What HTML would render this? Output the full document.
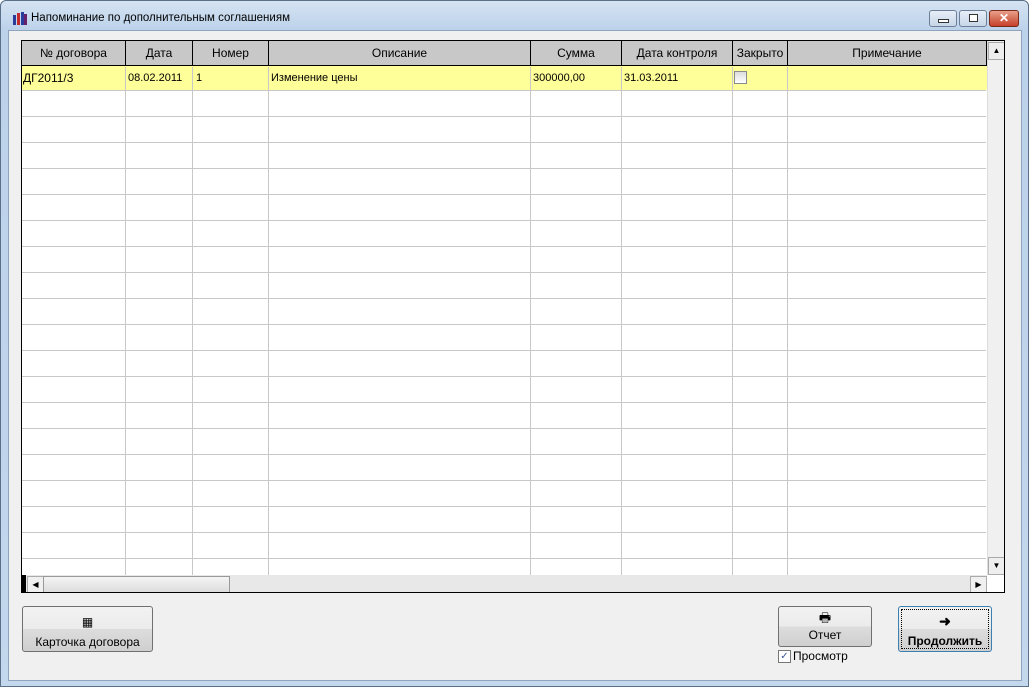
<!DOCTYPE html>
<html><head><meta charset="utf-8"><style>
body{margin:0;width:1030px;height:687px;overflow:hidden;font-family:"Liberation Sans",sans-serif;background:#fff}
.win{position:absolute;left:0;top:0;width:1029px;height:687px;border-radius:6px 6px 0 0;background:linear-gradient(#d6e4f3,#bcd2ea 30px,#c3d7ed);box-shadow:inset 0 0 0 1px #5a6f88}
.title{position:absolute;left:31px;top:12px;font-size:11.5px;color:#000}
.client{position:absolute;left:8px;top:30px;width:1012px;height:649px;background:#f0f0f0;border:1px solid #8ea4bd}
.grid{position:absolute;left:21px;top:40px;width:982px;height:551px;border:1px solid #000;background:#fff;overflow:hidden}
.h{position:absolute;top:0;height:25px;background:#c8c8c8;border-right:1px solid #000;border-bottom:1px solid #000;font-size:12px;text-align:center;line-height:25px;box-sizing:border-box}
.v{position:absolute;top:26px;height:508px;border-left:1px solid #c8c8c8}
.r{position:absolute;left:0;width:964px;border-top:1px solid #c8c8c8}
.c{position:absolute;top:25px;height:25px;line-height:24px;font-size:11px}
.btn{position:absolute;border:1px solid #707070;border-radius:3px;background:linear-gradient(#f2f2f2,#ebebeb 50%,#dddddd 50%,#cfcfcf);font-size:12px;text-align:center;box-sizing:border-box}
</style></head><body>
<div class="win">
<svg style="position:absolute;left:12px;top:10px" width="16" height="16"><rect x="1" y="5" width="3" height="10" fill="#2a3d9c"/><rect x="5" y="3" width="3" height="12" fill="#c22a2a"/><rect x="9" y="2" width="3" height="13" fill="#2a3d9c"/><rect x="12" y="4" width="3" height="11" fill="#6a1f6a"/></svg>
<div class="title">Напоминание по дополнительным соглашениям</div>
<div style="position:absolute;left:929px;top:10px;width:26px;height:15px;border:1px solid #6d7f96;border-radius:3px;background:linear-gradient(#e6eef8,#c8d6e8)"><div style="position:absolute;left:8px;top:8px;width:9px;height:2px;border:1px solid #333;background:#fff"></div></div>
<div style="position:absolute;left:959px;top:10px;width:26px;height:15px;border:1px solid #6d7f96;border-radius:3px;background:linear-gradient(#e6eef8,#c8d6e8)"><div style="position:absolute;left:9px;top:3px;width:7px;height:6px;border:1px solid #333;background:#fff"></div></div>
<div style="position:absolute;left:989px;top:10px;width:28px;height:15px;border:1px solid #7a2a1a;border-radius:3px;background:linear-gradient(#e8a08a,#c6402a);color:#fff;font-weight:bold;font-size:12px;text-align:center;line-height:15px">✕</div>
<div class="client"></div>
<div class="grid">
<div class="h" style="left:0;width:104px">№ договора</div>
<div class="h" style="left:104px;width:67px">Дата</div>
<div class="h" style="left:171px;width:76px">Номер</div>
<div class="h" style="left:247px;width:262px">Описание</div>
<div class="h" style="left:509px;width:91px">Сумма</div>
<div class="h" style="left:600px;width:111px">Дата контроля</div>
<div class="h" style="left:711px;width:55px">Закрыто</div>
<div class="h" style="left:766px;width:199px">Примечание</div>
<div style="position:absolute;left:0;top:25px;width:965px;height:24px;background:#ffff99"></div>
<div class="v" style="left:103px"></div><div class="v" style="left:170px"></div><div class="v" style="left:246px"></div><div class="v" style="left:508px"></div><div class="v" style="left:599px"></div><div class="v" style="left:710px"></div><div class="v" style="left:765px"></div>
<div class="r" style="top:49px"></div><div class="r" style="top:75px"></div><div class="r" style="top:101px"></div><div class="r" style="top:127px"></div><div class="r" style="top:153px"></div><div class="r" style="top:179px"></div><div class="r" style="top:205px"></div><div class="r" style="top:231px"></div><div class="r" style="top:257px"></div><div class="r" style="top:283px"></div><div class="r" style="top:309px"></div><div class="r" style="top:335px"></div><div class="r" style="top:361px"></div><div class="r" style="top:387px"></div><div class="r" style="top:413px"></div><div class="r" style="top:439px"></div><div class="r" style="top:465px"></div><div class="r" style="top:491px"></div><div class="r" style="top:517px"></div>
<div class="c" style="left:1px;font-size:12px">ДГ2011/3</div>
<div class="c" style="left:106px">08.02.2011</div>
<div class="c" style="left:174px">1</div>
<div class="c" style="left:249px">Изменение цены</div>
<div class="c" style="left:511px">300000,00</div>
<div class="c" style="left:602px">31.03.2011</div>
<div style="position:absolute;left:712px;top:30px;width:11px;height:11px;border:1px solid #8a8a8a;background:linear-gradient(#ddd,#fff)"></div>
<div style="position:absolute;left:965px;top:0;width:17px;height:534px;background:#f0f0f0;border-left:1px solid #ddd"></div>
<div style="position:absolute;left:966px;top:1px;width:15px;height:16px;background:#eee;border:1px solid #aaa;font-size:8px;text-align:center;line-height:16px">▲</div>
<div style="position:absolute;left:966px;top:516px;width:15px;height:16px;background:#eee;border:1px solid #aaa;font-size:8px;text-align:center;line-height:16px">▼</div>
<div style="position:absolute;left:0;top:534px;width:965px;height:17px;background:#e8e8e8"></div>
<div style="position:absolute;left:0;top:534px;width:4px;height:17px;background:#000"></div>
<div style="position:absolute;left:5px;top:535px;width:15px;height:15px;background:#f0f0f0;border:1px solid #aaa;font-size:8px;line-height:15px;text-align:center">◀</div>
<div style="position:absolute;left:21px;top:535px;width:185px;height:15px;background:linear-gradient(#f4f4f4,#ddd);border:1px solid #999"></div>
<div style="position:absolute;left:948px;top:535px;width:15px;height:15px;background:#f0f0f0;border:1px solid #aaa;font-size:8px;line-height:15px;text-align:center">▶</div>
</div>
<div class="btn" style="left:22px;top:606px;width:131px;height:46px"><div style="margin-top:8px;font-size:12px">▦</div><div style="margin-top:6px">Карточка договора</div></div>
<div class="btn" style="left:778px;top:606px;width:94px;height:41px"><div style="margin-top:3px;font-size:13px;line-height:16px">🖶</div><div style="margin-top:2px;line-height:14px">Отчет</div></div>
<div style="position:absolute;left:778px;top:650px;width:11px;height:11px;border:1px solid #777;background:#fff;font-size:10px;line-height:11px;text-align:center;color:#3a5aa0">✓</div>
<div style="position:absolute;left:793px;top:649px;font-size:12px">Просмотр</div>
<div class="btn" style="left:898px;top:606px;width:94px;height:46px;border-color:#3c7fb1"><div style="position:absolute;left:2px;top:2px;right:2px;bottom:2px;border:1px dotted #000"></div><div style="margin-top:6px;font-size:14px;font-weight:bold">➜</div><div style="margin-top:4px;font-weight:bold">Продолжить</div></div>
</div>
</body></html>
